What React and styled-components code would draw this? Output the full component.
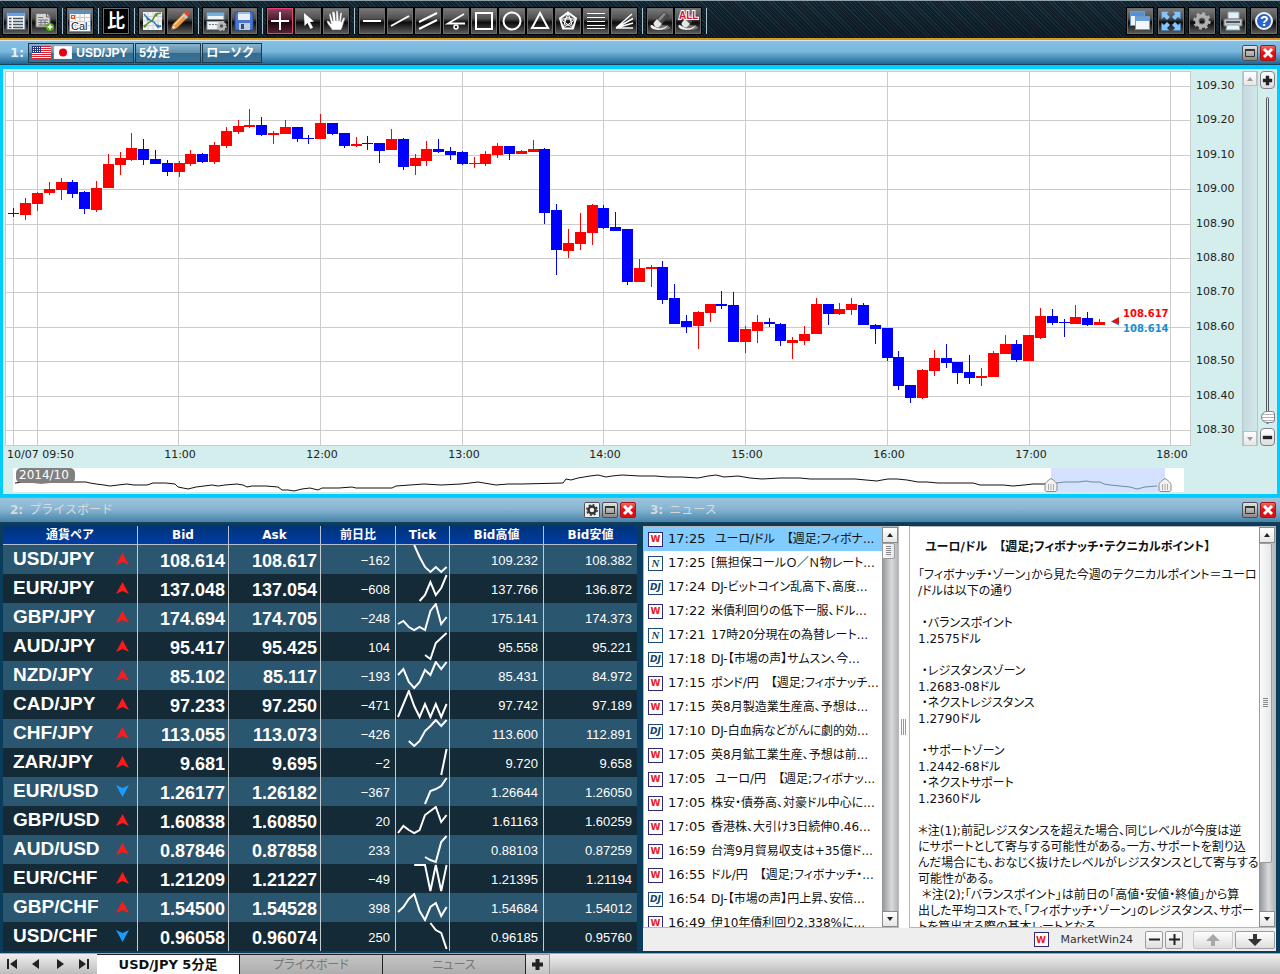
import React, { useState } from 'react';
import styled, { createGlobalStyle, css } from 'styled-components';

const verdana = '"DejaVu Sans", "Noto Sans CJK JP", sans-serif';
const arial = '"Liberation Sans", "Noto Sans CJK JP", sans-serif';

const GlobalStyle = createGlobalStyle`
  * {
    box-sizing: border-box;
  }

  body {
    margin: 0;
    background: #0a3d5c;
    font-family: ${verdana};
    font-size: 12px;
  }

  button {
    margin: 0;
    padding: 0;
    font: inherit;
    cursor: pointer;
  }
`;

const Page = styled.div`
  display: flex;
  flex-direction: column;
  min-height: 100vh;
`;

const Toolbar = styled.header`
  display: flex;
  align-items: center;
  justify-content: space-between;
  height: 40px;
  padding: 2px 2px 0;
  border-top: 1px solid #8fa0a8;
  border-bottom: 2px solid #dc961c;
  background: linear-gradient(rgba(6, 14, 20, 0.1), rgba(6, 14, 20, 0.5)),
    repeating-linear-gradient(45deg, #14242f 0 2px, #213e4e 2px 3px);
`;

const ToolGroups = styled.div`
  display: flex;
`;

const ToolGroup = styled.div`
  display: flex;

  &::after {
    content: '';
    width: 1px;
    margin: 1px 3px 1px 4px;
    background: #a9c0cc;
  }
`;

const WindowTools = styled.div`
  display: flex;
  gap: 3px;
`;

const ToolButton = styled.button`
  display: flex;
  align-items: center;
  justify-content: center;
  width: 28px;
  height: 28px;
  border: 1px solid #000;
  outline: 1px solid ${props => (props.$active ? '#e8417c' : '#6d6d6d')};
  outline-offset: -2px;
  background: ${props => {
    if (props.$active) return 'linear-gradient(#8d4a60 0%, #4a1526 48%, #16040a 52%, #5e2437 100%)';
    if (props.$dark) return '#000';
    return 'linear-gradient(#7c7c7c 0%, #505050 40%, #0c0c0c 56%, #606060 100%)';
  }};
`;

const Pane = styled.section`
  display: flex;
  flex-direction: column;
  min-width: 0;
`;

const TitleBar = styled.div`
  display: flex;
  align-items: center;
  height: ${props => (props.$focused ? '25px' : '26px')};
  padding: 0 4px 0 10px;
  border-top: 1px solid ${props => (props.$focused ? '#d4e8f4' : '#8e9aa4')};
  border-bottom: 1px solid #16425e;
  color: ${props => (props.$focused ? '#e4f0f8' : '#d4dade')};
  background: ${props => (props.$focused
    ? 'linear-gradient(#86c0e4 0%, #7ab8de 45%, #1d6795 100%)'
    : 'linear-gradient(#9cc3dc 0%, #88b6d2 45%, #4683a8 100%)')};
`;

const Title = styled.h2`
  flex: 1;
  margin: 0;
  font-size: 12px;
  font-weight: bold;
  line-height: 16px;
  white-space: pre;

  span {
    margin-left: 2px;
    font-weight: normal;
  }
`;

const TitleNumber = styled.h2`
  margin: 0 4px 0 0;
  font-size: 13px;
  line-height: 16px;
`;

const ChartOptions = styled.div`
  display: flex;
  flex: 1;
  gap: 1px;
`;

const ChartOption = styled.button`
  display: flex;
  align-items: center;
  gap: 4px;
  width: ${props => props.$width}px;
  height: 20px;
  padding: 0 3px;
  border: 1px solid #1b3b50;
  color: #fff;
  font-family: ${arial};
  font-size: 12px;
  font-weight: bold;
  line-height: 18px;
  white-space: nowrap;
  background: linear-gradient(#8ab4cc 0%, #5e8fac 48%, #346b8e 52%, #3b7396 100%);
`;

const WindowButtons = styled.div`
  display: flex;
  gap: 2px;
`;

const WindowButton = styled.button`
  display: flex;
  align-items: center;
  justify-content: center;
  width: 16px;
  height: 16px;
  border: 1px solid ${props => (props.$close ? '#a51414' : '#4c5054')};
  border-radius: 2px;
  background: ${props => (props.$close
    ? 'linear-gradient(#f06a60, #e01010 50%)'
    : 'linear-gradient(#e4e4e4, #888)')};
`;

const ChartBody = styled.div`
  padding-bottom: 2px;
  border: 3px solid #00ccff;
  border-top-width: 4px;
  background: #d4eded;
`;

const ChartRow = styled.div`
  display: flex;
  height: 399px;
`;

const PlotSvg = styled.svg`
  flex: 1;
  min-width: 0;
  height: 397px;
`;

const AxisSvg = styled.svg`
  width: 50px;
  height: 397px;
`;

const ChartScroll = styled.div`
  display: flex;
  flex-direction: column;
  justify-content: space-between;
  width: 16px;
  height: 375px;
  margin-top: 2px;
  border-left: 1px solid #b4cad0;
  border-right: 1px solid #b4cad0;
  background: linear-gradient(90deg, #c4dadf, #d2e7ea);
`;

const ScrollButton = styled.button`
  display: flex;
  align-items: center;
  justify-content: center;
  flex: none;
  width: 100%;
  height: ${props => (props.$faded ? '15px' : '16px')};
  border: 1px solid ${props => (props.$faded ? '#b8c0c4' : '#8c8c8c')};
  background: linear-gradient(#fff, #e6e6e6);
`;

const ZoomColumn = styled.div`
  display: flex;
  flex-direction: column;
  align-items: center;
  width: 19px;
  height: 375px;
  margin-top: 2px;
`;

const ZoomButton = styled.button`
  display: flex;
  align-items: center;
  justify-content: center;
  flex: none;
  width: 15px;
  height: 18px;
  border: 1px solid #808488;
  border-radius: 4px;
  background: linear-gradient(#fff, #dcdcdc);
`;

const ZoomSlider = styled.input`
  appearance: none;
  flex: 1;
  width: 16px;
  min-height: 0;
  margin: 8px 0 4px;
  writing-mode: vertical-lr;
  direction: rtl;
  background: transparent;

  &::-webkit-slider-runnable-track {
    width: 3px;
    border: 1px solid #50585c;
    border-radius: 2px;
    background: #dbe6e8;
  }

  &::-webkit-slider-thumb {
    appearance: none;
    width: 14px;
    height: 12px;
    margin-left: -6px;
    border: 1px solid #808488;
    border-radius: 8px 4px 4px 8px;
    background: repeating-linear-gradient(#fff 0 2px, #b4b4b4 2px 3px);
  }
`;

const NavigatorSvg = styled.svg`
  display: block;
  width: 100%;
  height: 24px;
`;

const Workspace = styled.main`
  display: grid;
  grid-template-columns: 1fr 1fr;
  flex: 1;
`;

const PaneBody = styled.div`
  display: flex;
  flex-direction: column;
  flex: 1;
  padding: 3px ${props => props.$right || '3px'} 2px 3px;
  background: #0a3d5c;
`;

const PriceTable = styled.table`
  width: 100%;
  table-layout: fixed;
  border-collapse: separate;
  border-spacing: 0;
  color: #fff;
`;

const HeadCell = styled.th`
  height: 19px;
  padding: 0;
  border-right: 1px solid #b9c3d6;
  border-bottom: 1px solid #b4bfcc;
  font-size: 12px;
  line-height: 16px;
  background: linear-gradient(#003478, #003ca4);

  &:last-child {
    border-right: 0;
  }
`;

const PriceRow = styled.tr`
  background: #142a36;

  &:nth-child(odd) {
    background: #2b566f;
  }
`;

const cell = css`
  height: 29px;
  border-right: 1px solid #c4ccd2;
  font-family: ${arial};

  &:last-child {
    border-right: 0;
  }
`;

const PairCell = styled.th`
  ${cell}
  padding: 0 8px 2px 10px;
  text-align: left;
`;

const PairLabel = styled.div`
  display: flex;
  align-items: center;
  justify-content: space-between;
  font-size: 19px;
  line-height: 26px;
`;

const RateCell = styled.td`
  ${cell}
  padding: 3px 3px 0;
  font-size: 18px;
  font-weight: bold;
  line-height: 26px;
  text-align: right;
`;

const NumberCell = styled.td`
  ${cell}
  padding: 3px 5px 0;
  font-size: 13px;
  line-height: 26px;
  text-align: right;
`;

const TickCell = styled.td`
  ${cell}
  padding: 0;

  svg {
    display: block;
    margin-left: auto;
  }
`;

const NewsBody = styled.div`
  display: flex;
  flex: 1;
  background: #fff;
  font-feature-settings: "palt";
`;

const NewsListBox = styled.div`
  display: flex;
  flex: none;
  width: 256px;
  border: 1px solid #b4b8ba;
`;

const NewsList = styled.ul`
  flex: 1;
  contain: size;
  overflow: hidden;
  margin: 0;
  padding: 0;
  list-style: none;
`;

const NewsItem = styled.li`
  background: ${props => (props.$selected ? '#80ccff' : '#fff')};
`;

const NewsLink = styled.a`
  display: flex;
  align-items: center;
  height: 24px;
  padding-left: 4px;
  color: #111;
  font-size: 12px;
  line-height: 16px;
  text-decoration: none;
  white-space: pre;
`;

const NewsTime = styled.time`
  width: 43px;
  margin-left: 5px;
  font-size: 13px;
`;

const SourceBadge = styled.span`
  display: flex;
  align-items: center;
  justify-content: center;
  flex: none;
  width: 15px;
  height: 15px;
  border: 1px solid ${props => (props.$source === 'W' ? '#2e2a78' : '#1d4a7c')};
  color: ${props => (props.$source === 'W' ? '#f01818' : '#12406c')};
  background: #fff;
  font-family: ${props => (props.$source === 'N' ? '"Liberation Serif", serif' : verdana)};
  font-size: ${props => (props.$source === 'N' ? '11px' : '9px')};
  font-weight: bold;
  font-style: ${props => (props.$source === 'W' ? 'normal' : 'italic')};
  line-height: 12px;
`;

const VerticalScroll = styled.div`
  display: flex;
  flex-direction: column;
  flex: none;
  width: 16px;
  background: linear-gradient(90deg, #8f9396, #d8dadb 60%, #b2b5b8);
`;

const ScrollTrack = styled.div`
  flex: 1;
`;

const ScrollThumb = styled.div`
  display: flex;
  align-items: center;
  justify-content: center;
  width: 13px;
  height: ${props => props.$height};
  border: 1px solid #9a9ea0;
  border-radius: 0 2px 2px 0;
  background: linear-gradient(90deg, #fafafa, #e8e8e8);
`;

const Splitter = styled.div`
  display: flex;
  align-items: center;
  justify-content: center;
  flex: none;
  width: 10px;
`;

const ArticleBox = styled.div`
  display: flex;
  flex: 1;
  min-width: 0;
  border: 1px solid #b4b8ba;
`;

const Article = styled.article`
  flex: 1;
  contain: size;
  overflow: hidden;
  padding: 12px 0 0 8px;
  color: #111;
  font-size: 12px;
  line-height: 16px;
  white-space: pre;
`;

const ArticleTitle = styled.h3`
  margin: 0 0 12px;
  padding-left: 3px;
  font-size: 12px;
  line-height: 16px;
`;

const ArticleLine = styled.p`
  min-height: 16px;
  margin: 0;
`;

const NewsFooter = styled.footer`
  display: flex;
  align-items: center;
  justify-content: flex-end;
  height: 23px;
  padding: 0 1px;
  color: #333;
  font-size: 11px;
  background: #eee;
`;

const SourceName = styled.span`
  margin: 0 12px;
`;

const FooterGroup = styled.div`
  display: flex;
  gap: 2px;
  margin-left: ${props => props.$gap || '0'};
`;

const FooterButton = styled.button`
  display: flex;
  align-items: center;
  justify-content: center;
  width: ${props => (props.$wide ? '40px' : '18px')};
  height: 18px;
  border: 1px solid ${props => (props.disabled ? '#c8c8c8' : '#9c9c9c')};
  border-radius: 2px;
  background: linear-gradient(#fefefe, #dedede);
`;

const TabBar = styled.nav`
  display: flex;
  height: 21px;
  border-top: 1px solid #a8a8a8;
  background: linear-gradient(#f0f0f0, #bcbcbc);
`;

const TabArrows = styled.div`
  display: flex;
  width: 97px;
`;

const TabArrow = styled.button`
  display: flex;
  align-items: center;
  justify-content: center;
  width: 24px;
  border: 0;
  background: transparent;
`;

const Tab = styled.button`
  width: 143px;
  border: 1px solid #222;
  border-width: 1px 1px 0 0;
  color: ${props => (props.$selected ? '#111' : '#777')};
  font-size: ${props => (props.$selected ? '13px' : '12px')};
  font-weight: ${props => (props.$selected ? 'bold' : 'normal')};
  font-feature-settings: "palt";
  line-height: 18px;
  background: ${props => (props.$selected ? '#fff' : 'linear-gradient(#c4c4c4, #aeaeae)')};
`;

const AddTab = styled.button`
  display: flex;
  align-items: center;
  justify-content: center;
  width: 24px;
  border: 1px solid #999;
  border-width: 1px 1px 0 0;
  background: linear-gradient(#e4e4e4, #c4c4c4);
`;

// direction, high, body top, body bottom, low
const candles = [
  ['d', 208, 213, 214, 217], ['u', 198, 203, 215, 220], ['u', 192, 193, 204, 211], ['u', 182, 189, 193, 195],
  ['u', 178, 182, 190, 200], ['d', 180, 182, 194, 198], ['d', 191, 192, 209, 214], ['u', 181, 188, 210, 212],
  ['u', 154, 164, 188, 188], ['u', 152, 158, 165, 175], ['u', 133, 148, 160, 161], ['d', 139, 149, 160, 165],
  ['d', 150, 159, 164, 164], ['d', 160, 163, 172, 176], ['u', 161, 163, 172, 177], ['u', 150, 154, 164, 166],
  ['d', 153, 154, 162, 163], ['u', 142, 145, 162, 164], ['u', 127, 131, 146, 148], ['u', 120, 126, 132, 134],
  ['u', 109, 125, 127, 128], ['d', 117, 125, 135, 136], ['u', 131, 133, 135, 144], ['u', 120, 127, 134, 134],
  ['d', 127, 127, 139, 142], ['d', 135, 138, 139, 144], ['u', 114, 123, 139, 139], ['d', 123, 123, 134, 135],
  ['d', 133, 133, 146, 148], ['u', 137, 144, 146, 147], ['d', 136, 143, 144, 150], ['d', 143, 143, 151, 163],
  ['u', 129, 139, 150, 150], ['d', 138, 139, 167, 170], ['u', 154, 158, 166, 175], ['u', 141, 149, 161, 166],
  ['d', 139, 149, 152, 153], ['d', 147, 151, 155, 160], ['d', 151, 152, 164, 165], ['u', 157, 163, 164, 168],
  ['u', 151, 154, 164, 166], ['u', 143, 146, 155, 158], ['d', 146, 146, 154, 160], ['u', 150, 151, 154, 154],
  ['u', 140, 149, 152, 152], ['d', 148, 149, 213, 224], ['d', 204, 210, 250, 275], ['u', 229, 243, 251, 258],
  ['u', 213, 232, 244, 250], ['u', 204, 205, 233, 245], ['d', 205, 208, 228, 229], ['d', 212, 227, 231, 231],
  ['d', 229, 229, 282, 285], ['u', 259, 268, 282, 282], ['u', 265, 267, 269, 287], ['d', 261, 267, 300, 304],
  ['d', 284, 298, 324, 324], ['d', 315, 321, 327, 333], ['u', 311, 312, 326, 349], ['u', 304, 304, 313, 322],
  ['d', 291, 304, 306, 309], ['d', 292, 305, 342, 342], ['u', 326, 329, 342, 353], ['u', 315, 322, 331, 343],
  ['d', 318, 322, 324, 327], ['d', 323, 324, 341, 346], ['u', 337, 340, 343, 359], ['u', 326, 334, 341, 345],
  ['u', 298, 304, 334, 334], ['d', 304, 304, 314, 325], ['u', 303, 309, 314, 315], ['u', 298, 304, 310, 315],
  ['d', 303, 305, 325, 325], ['d', 324, 325, 329, 344], ['d', 328, 328, 358, 361], ['d', 351, 357, 386, 390],
  ['d', 385, 385, 398, 403], ['u', 369, 370, 398, 399], ['u', 350, 358, 371, 376], ['d', 344, 358, 363, 368],
  ['d', 362, 362, 373, 384], ['d', 355, 372, 378, 384], ['u', 368, 376, 378, 386], ['u', 351, 353, 377, 377],
  ['u', 335, 344, 354, 354], ['d', 340, 344, 360, 362], ['u', 335, 335, 361, 361], ['u', 308, 316, 338, 339],
  ['d', 309, 316, 323, 325], ['d', 319, 322, 323, 337], ['u', 305, 317, 324, 324], ['d', 312, 318, 325, 326],
  ['u', 319, 322, 325, 325],
];

const priceLines = [
  [86, '109.30'], [120, '109.20'], [155, '109.10'], [189, '109.00'], [224, '108.90'], [258, '108.80'],
  [292, '108.70'], [327, '108.60'], [361, '108.50'], [396, '108.40'], [430, '108.30'],
];

const timeLines = [
  [178, '11:00'], [320, '12:00'], [462, '13:00'], [603, '14:00'], [745, '15:00'], [887, '16:00'],
  [1029, '17:00'], [1170, '18:00'],
];

const history = '15,15 24,14 41,15 60,14 86,14 90,15 96,16 104,17 110,18 118,17 127,16 134,17 147,17 153,15 159,15 166,15 175,16 178,19 188,21 196,19 204,18 212,17 218,18 225,17 237,16 243,17 247,19 252,18 257,18 266,18 278,19 282,22 288,22 294,23 302,21 310,20 318,22 322,20 339,20 352,19 356,20 392,20 396,18 410,17 424,16 441,17 461,16 470,15 478,14 484,15 496,17 508,16 522,16 563,15 566,11 571,12 578,10 584,9 590,8 598,7 606,9 612,8 622,7 640,8 655,8 668,9 682,9 698,10 708,8 716,7 724,9 738,8 750,10 762,11 780,10 800,10 810,11 833,11 855,11 866,12 877,13 882,12 888,11 897,11 907,12 918,14 927,14 938,15 947,15 960,15 973,15 980,17 993,17 1003,17 1013,18 1024,17 1033,16 1047,16';
const recent = '1047,16 1057,15 1064,14 1078,14 1086,13 1092,14 1100,14 1104,16 1110,17 1120,18 1130,19 1137,21 1145,19 1157,18';

const prices = [
  ['USD/JPY', 'up', '108.614', '108.617', '−162', [0, 12, 22, 27, 22, 27, 22], '109.232', '108.382'],
  ['EUR/JPY', 'up', '137.048', '137.054', '−608', [27, 21, 8, 21, 14, 1], '137.766', '136.872'],
  ['GBP/JPY', 'up', '174.694', '174.705', '−248', [21, 18, 24, 27, 24, 27, 8, 1, 21, 14], '175.141', '174.373'],
  ['AUD/JPY', 'up', '95.417', '95.425', '104', [23, 27, 11, 6, 1], '95.558', '95.221'],
  ['NZD/JPY', 'up', '85.102', '85.117', '−193', [14, 8, 21, 27, 21, 9, 14, 1, 8, 1], '85.431', '84.972'],
  ['CAD/JPY', 'up', '97.233', '97.250', '−471', [27, 14, 1, 16, 27, 14, 27, 14, 27, 14], '97.742', '97.189'],
  ['CHF/JPY', 'up', '113.055', '113.073', '−426', [22, 27, 22, 12, 7, 1, 7, 1], '113.600', '112.891'],
  ['ZAR/JPY', 'up', '9.681', '9.695', '−2', [27, 1], '9.720', '9.658'],
  ['EUR/USD', 'down', '1.26177', '1.26182', '−367', [27, 14, 12, 9, 1], '1.26644', '1.26050'],
  ['GBP/USD', 'up', '1.60838', '1.60850', '20', [27, 20, 24, 27, 24, 9, 5, 1, 16, 9], '1.61163', '1.60259'],
  ['AUD/USD', 'up', '0.87846', '0.87858', '233', [22, 25, 27, 7, 1], '0.88103', '0.87259'],
  ['EUR/CHF', 'up', '1.21209', '1.21227', '−49', [1, 1, 1, 27, 1, 27, 1], '1.21395', '1.21194'],
  ['GBP/CHF', 'up', '1.54500', '1.54528', '398', [19, 14, 6, 1, 18, 27, 14, 10, 23, 14], '1.54684', '1.54012'],
  ['USD/CHF', 'down', '0.96058', '0.96074', '250', [1, 8, 11, 27], '0.96185', '0.95760'],
];

const columns = [
  ['通貨ペア', 135], ['Bid', 91], ['Ask', 92], ['前日比', 75], ['Tick', 54], ['Bid高値', 94], ['Bid安値', 93],
];

const news = [
  ['W', '17:25', ' ユーロ/ドル　【週足;フィボナ...'],
  ['N', '17:25', '[無担保コールＯ／Ｎ物レート...'],
  ['DJ', '17:24', 'DJ-ビットコイン乱高下、高度...'],
  ['W', '17:22', '米債利回りの低下一服、ドル...'],
  ['N', '17:21', '17時20分現在の為替レート...'],
  ['DJ', '17:18', 'DJ-【市場の声】サムスン、今...'],
  ['W', '17:15', 'ポンド/円　【週足;フィボナッチ...'],
  ['W', '17:15', '英8月製造業生産高、予想は...'],
  ['DJ', '17:10', 'DJ-白血病などがんに劇的効...'],
  ['W', '17:05', '英8月鉱工業生産、予想は前...'],
  ['W', '17:05', ' ユーロ/円　【週足;フィボナッ...'],
  ['W', '17:05', '株安・債券高、対豪ドル中心に...'],
  ['W', '17:05', '香港株、大引け3日続伸0.46...'],
  ['W', '16:59', '台湾9月貿易収支は+35億ド...'],
  ['W', '16:55', 'ドル/円　【週足;フィボナッチ・...'],
  ['DJ', '16:54', 'DJ-【市場の声】円上昇、安倍...'],
  ['W', '16:49', '伊10年債利回り2.338%に...'],
];

const articleLines = [
  '「フィボナッチ・ゾーン」から見た今週のテクニカルポイント＝ユーロ',
  '/ドルは以下の通り',
  '',
  ' ・バランスポイント',
  '1.2575ドル',
  '',
  ' ・レジスタンスゾーン',
  '1.2683-08ドル',
  ' ・ネクストレジスタンス',
  '1.2790ドル',
  '',
  ' ・サポートゾーン',
  '1.2442-68ドル',
  ' ・ネクストサポート',
  '1.2360ドル',
  '',
  '＊注(1);前記レジスタンスを超えた場合、同じレベルが今度は逆',
  'にサポートとして寄与する可能性がある。一方、サポートを割り込',
  'んだ場合にも、おなじく抜けたレベルがレジスタンスとして寄与する',
  '可能性がある。',
  ' ＊注(2);「バランスポイント」は前日の「高値・安値・終値」から算',
  '出した平均コストで、「フィボナッチ・ゾーン」のレジスタンス、サポー',
  'トを算出する際の基本レートとなる。',
];

const Glyph = ({ size = 22, children }) => (
  <svg width={size} height={size} viewBox="0 0 22 22" fill="none" aria-hidden="true">{children}</svg>
);

const Eraser = () => (
  <>
    <ellipse cx="13" cy="17.500" rx="8" ry="2.500" fill="#bbb" opacity="0.5" />
    <path d="M1.500 15.500C3 14 5 17 8 18s8 0 11-3c-2 5-9 5.500-13 4.500-3-.5-5-2-4.500-4z" fill="#f2f2f2" />
    <path d="M8 9 15 2l5 4-7 8z" fill="#4c4c4c" stroke="#2a2a2a" strokeWidth="0.500" />
    <path d="m9 9 6-6.500 2 1.500-6 7z" fill="#8a8a8a" />
    <path d="m4.500 13 3.500-4 5 5-3.500 3.500c-3 0-5-2-5-4.500z" fill="#e6e6e6" />
  </>
);

const icons = {
  list: (
    <>
      <rect x="2" y="2.500" width="18" height="17" fill="#f4f6f8" stroke="#4d7db0" />
      <path d="M2.500 3h17v3h-17z" fill="#6e9fd8" />
      <path d="M4 8.500h2.500M4 11.500h2.500M4 14.500h2.500M4 17.500h2.500M8 8.500h10M8 11.500h10M8 14.500h10M8 17.500h10" stroke="#4c5660" strokeWidth="1.500" />
    </>
  ),
  addSheet: (
    <>
      <path d="M3 3.500h11l3 3V17H3z" fill="#d4d4d4" stroke="#777" />
      <path d="M5 7.500h5M5 10h10M5 12.500h10M5 15h10M8 10v6M12 10v6" stroke="#777" />
      <path d="M13.500 3v4h4" stroke="#666" />
      <circle cx="17" cy="17" r="4" fill="#59a818" />
      <path d="M17 14.500v5M14.500 17h5" stroke="#fff" strokeWidth="1.500" />
    </>
  ),
  calendar: (
    <>
      <rect x="0.500" y="0.500" width="21" height="21" fill="#fafafa" stroke="#789" />
      <path d="M1 1h20v3H1z" fill="#5590cc" />
      <path d="M1 7.500h20M1 11.500h20M1 15.500h20M6.500 4v17M11 4v17M15.500 4v17" stroke="#c8c8c8" />
      <rect x="2.500" y="5.500" width="3" height="3" stroke="#e05020" />
      <text x="2" y="20" fontSize="11" fontFamily="Liberation Sans" fill="#222" stroke="#fff" strokeWidth="2" paintOrder="stroke">Cal</text>
    </>
  ),
  compare: <text x="2" y="17" fontSize="18" fontWeight="bold" fontFamily="Noto Sans CJK JP" fill="#fff">比</text>,
  indicator: (
    <>
      <rect x="2" y="2" width="19" height="18" fill="#f0f3f5" />
      <path d="M2 6.500h19M2 11h19M2 15.500h19M7 2v18M12 2v18M17 2v18" stroke="#ccd4d8" />
      <path d="m3 17 4-4 4-2 4-7 5-1" stroke="#688c25" strokeWidth="1.500" />
      <path d="m3 4 4 5 6 3 4 5 3-1" stroke="#3777aa" strokeWidth="1.500" />
      <circle cx="7" cy="9" r="1.500" fill="#3777aa" />
      <circle cx="15" cy="5" r="1.500" fill="#688c25" />
      <circle cx="17" cy="16" r="1.500" fill="#3777aa" />
      <circle cx="4" cy="16" r="1.500" fill="#688c25" />
    </>
  ),
  pencil: (
    <>
      <path d="m2 20 2-6L15 3l4 4L8 18z" fill="#e89a48" stroke="#9c5720" strokeWidth="0.500" />
      <path d="m5 15 11-11" stroke="#ffd090" strokeWidth="1.500" />
      <path d="m14 4 2-3c2-1 5 1 4 4l-3 2z" fill="#d84a35" />
      <path d="m13 5 2-2 4 4-2 2z" fill="#c4c8ca" />
      <path d="m2 20 2-5 3 3z" fill="#ead3b0" />
      <path d="m2 20 1-2 1 1z" fill="#111" />
    </>
  ),
  panelGear: (
    <>
      <rect x="2" y="2.500" width="17" height="7" fill="#eef4f8" stroke="#5f90ba" />
      <path d="M2 3h17v3H2z" fill="#78afd9" />
      <rect x="2" y="11.500" width="17" height="8" fill="#eef4f8" stroke="#8aa" />
      <path d="M4 14.500h9" stroke="#678" strokeDasharray="2 1" />
      <circle cx="16.500" cy="16" r="3" stroke="#b8b8b8" strokeWidth="2.500" fill="#555" />
      <circle cx="16.500" cy="16" r="4.500" stroke="#b8b8b8" strokeWidth="1.500" strokeDasharray="1.770 1.770" />
    </>
  ),
  save: (
    <>
      <path d="M3 2h16l1 1v17H2V3z" fill="#4a78d0" stroke="#274b91" />
      <path d="M5 2h12v8H5z" fill="#ecf0f5" />
      <path d="M5 2h12v2H5z" fill="#9bbbe4" />
      <path d="M6 13h11v7H6z" fill="#c4ccd6" />
      <path d="M8 14h3v5H8z" fill="#2e4c83" />
    </>
  ),
  cross: <path d="M11 2v18M2 11h18" stroke="#fff" strokeWidth="2" />,
  cursor: <path d="m7 3 .5 13 3-3 3 6 2.500-1.500L13 12l4-.5z" fill="#fff" />,
  hand: (
    <path
      d="M7 20c-1-3-6-7-5-9 1-1 3 1 4 3L4 5c0-2 2-2 2 0l2 6-1-8c0-2 2-2 3 0l1 8V2c0-2 2-2 2 0l1 9 1-7c0-2 3-2 2 0l-1 8 2-4c1-1 2 0 2 1-2 4-2 8-4 11z"
      fill="#fff"
      stroke="#555"
      strokeWidth="0.500"
    />
  ),
  horizontal: <path d="M2 11h18" stroke="#fff" strokeWidth="2" />,
  trend: <path d="M2 16 20 6" stroke="#fff" strokeWidth="2" />,
  parallel: <path d="m2 12 18-9M2 19 20 10" stroke="#fff" strokeWidth="2" />,
  angle: (
    <>
      <path d="M19 4 3 13.500h17" stroke="#fff" strokeWidth="1.800" />
      <circle cx="11" cy="17" r="2" stroke="#fff" strokeWidth="1.500" />
    </>
  ),
  square: <rect x="3" y="3" width="16" height="16" stroke="#fff" strokeWidth="2" />,
  circle: <circle cx="11" cy="11" r="8.500" stroke="#fff" strokeWidth="2" />,
  triangle: <path d="m11 3 8 15H3z" stroke="#fff" strokeWidth="2" />,
  pentagon: (
    <>
      <path d="m11 2.500 8 6-3 10H6L3 8.500z" stroke="#fff" strokeWidth="2" />
      <path d="M11 3 6 18 19 9H3l13 9z" stroke="#fff" strokeWidth="1" />
      <circle cx="11" cy="11.500" r="4" stroke="#fff" strokeWidth="0.800" />
    </>
  ),
  levels: <path d="M2 3.500h18M2 7.500h18M2 11.500h18M2 15.500h18M2 18.500h18" stroke="#fff" strokeWidth="1" />,
  fan: <path d="M3 18 19 4M3 18 20 8.500M3 18l17-5M3 18h17" stroke="#fff" strokeWidth="1.500" />,
  eraser: <Eraser />,
  eraseAll: (
    <>
      <Eraser />
      <text x="2" y="9" fontSize="10" fontWeight="bold" fontFamily="Liberation Sans Narrow, Liberation Sans" fill="#d4143c" stroke="#fff" strokeWidth="2" paintOrder="stroke">ALL</text>
    </>
  ),
  windows: (
    <>
      <rect x="1.500" y="1.500" width="14" height="14" fill="#eef3f8" stroke="#6c9bc8" />
      <path d="M2 2h13v4H2z" fill="#5790d0" />
      <rect x="6.500" y="6.500" width="14" height="13" fill="#f4f7fa" stroke="#6c9bc8" />
      <path d="M7 7h13v4H7z" fill="#6aa0da" />
    </>
  ),
  expand: (
    <g fill="#8ac4f6" stroke="#3b7fc4" strokeWidth="0.600">
      <path d="M1.500 2c0-.5.500-.5.500-.5h7L7 4l3 3-3 3-3-3-2.500 2z" />
      <path d="M20.500 2c0-.5-.5-.5-.5-.5h-7L15 4l-3 3 3 3 3-3 2.500 2z" />
      <path d="M1.500 20c0 .5.500.5.500.5h7L7 18l3-3-3-3-3 3-2.500-2z" />
      <path d="M20.500 20c0 .5-.5.5-.5.5h-7l2-2.500-3-3 3-3 3 3 2.500-2z" />
    </g>
  ),
  gear: (
    <>
      <circle cx="11" cy="11" r="5" stroke="#b0b0b0" strokeWidth="4" />
      <circle cx="11" cy="11" r="7.500" stroke="#b0b0b0" strokeWidth="2.500" strokeDasharray="2.950 2.940" />
      <circle cx="11" cy="11" r="3" stroke="#666" />
    </>
  ),
  print: (
    <>
      <path d="M6 2h11v7H6z" fill="#e4eef8" stroke="#8aa" />
      <path d="M2 9h18v7H2z" fill="#c2c6c8" stroke="#777" />
      <path d="M4 11h14v2H4z" fill="#555" />
      <path d="M5 15h12l1 5H4z" fill="#e8f2fb" stroke="#8aa" />
    </>
  ),
  help: (
    <>
      <circle cx="11" cy="11" r="8" fill="#2d62c8" stroke="#f0f4fa" strokeWidth="2" />
      <text x="7" y="16" fontSize="14" fontWeight="bold" fontFamily="Liberation Sans" fill="#fff">?</text>
    </>
  ),
};

const toolGroups = [
  ['list', 'addSheet'],
  ['calendar'],
  ['compare'],
  ['indicator', 'pencil'],
  ['panelGear', 'save'],
  ['cross', 'cursor', 'hand'],
  ['horizontal', 'trend', 'parallel', 'angle', 'square', 'circle', 'triangle', 'pentagon', 'levels', 'fan'],
  ['eraser', 'eraseAll'],
];

const windowTools = ['windows', 'expand', 'gear', 'print', 'help'];

const Triangle = ({ down, color = '#222' }) => (
  <svg width="8" height="6" viewBox="0 0 8 6" aria-hidden="true">
    <path d={down ? 'M1 1h6L4 5z' : 'M1 5h6L4 1z'} fill={color} />
  </svg>
);

const PlusMinus = ({ plus, bold, size = 13 }) => (
  <svg width={size} height={size} viewBox="0 0 13 13" aria-hidden="true">
    <path d={plus ? 'M6.500 1v11M1 6.500h11' : 'M1 6.500h11'} stroke="#222" strokeWidth={bold ? 4 : 2} />
  </svg>
);

const PaneButtons = ({ gear }) => (
  <WindowButtons>
    {gear && (
      <WindowButton aria-label="設定">
        <svg width="14" height="14" viewBox="0 0 14 14" fill="none">
          <rect width="14" height="14" fill="#eee" />
          <circle cx="7" cy="7" r="3.500" stroke="#333" strokeWidth="2.500" />
          <circle cx="7" cy="7" r="5.200" stroke="#333" strokeWidth="1.500" strokeDasharray="2 2.080" />
        </svg>
      </WindowButton>
    )}
    <WindowButton aria-label="最大化">
      <svg width="12" height="10" viewBox="0 0 12 10" fill="none">
        <path d="M1.500 1.500h9v7h-9z" stroke="#333" />
        <path d="M1.500 2h9" stroke="#333" strokeWidth="2" />
      </svg>
    </WindowButton>
    <WindowButton $close aria-label="閉じる">
      <svg width="12" height="12" viewBox="0 0 12 12">
        <path d="m2 2 8 8M10 2l-8 8" stroke="#fff" strokeWidth="3" />
      </svg>
    </WindowButton>
  </WindowButtons>
);

const Flags = () => (
  <svg width="40" height="13" viewBox="0 0 40 13" aria-hidden="true">
    <rect width="19" height="13" fill="#fff" />
    <path d="M0 .5h19M0 2.500h19M0 4.500h19M0 6.500h19M0 8.500h19M0 10.500h19M0 12.500h19" stroke="#d8232e" />
    <rect width="9" height="7" fill="#26357e" />
    <path d="M1 1.500h8M1 3.500h8M1 5.500h8" stroke="#fff" strokeDasharray="1 1" />
    <rect x="22" width="18" height="13" fill="#fff" stroke="#ccc" strokeWidth="0.500" />
    <circle cx="31" cy="6.500" r="4" fill="#e60012" />
  </svg>
);

const CandleChart = () => (
  <PlotSvg role="img" aria-label="USD/JPY 5分足">
    <g transform="translate(-3 -69)" shapeRendering="crispEdges">
      <rect x="5" y="71" width="1186" height="375" fill="#ccc" />
      <rect x="6" y="72" width="1184" height="373" fill="#fff" />
      {priceLines.map(([y]) => <rect key={y} x="6" y={y} width="1184" height="1" fill="#ccc" />)}
      {[13, 37, ...timeLines.map(([x]) => x)].map(x => (
        <rect key={x} x={x} y="72" width="1" height="373" fill="#ccc" />
      ))}
      {candles.map(([dir, high, top, bottom, low], i) => {
        const x = Math.round(13.4 + i * 11.8);
        const color = dir === 'u' ? '#f00' : '#00f';
        return (
          <g key={x} fill={color}>
            <rect x={x} y={high} width="1" height={low - high} />
            <rect x={x - 5} y={top} width="11" height={bottom - top} />
          </g>
        );
      })}
    </g>
    <g transform="translate(-3 -69)" fontFamily="DejaVu Sans" fontSize="11">
      <path d="m1111 321.500 8 4v-4z" fill="#1a95d8" />
      <path d="m1111 321.500 8-4.500v7z" fill="#e01010" />
      <text x="1123" y="317" fontSize="10" fontWeight="bold" fill="#f00">108.617</text>
      <text x="1123" y="332" fontSize="10" fontWeight="bold" fill="#1a8fd0">108.614</text>
      <text x="7" y="458" fill="#222">10/07 09:50</text>
      {timeLines.map(([x, label]) => (
        <text key={label} x={x + 2} y="458" textAnchor="middle" fill="#222">{label}</text>
      ))}
    </g>
  </PlotSvg>
);

const Handle = ({ x }) => (
  <g transform={`translate(${x} 0)`}>
    <path d="M0 10.500c3 2 6 4 6 7V22c0 1-1 1.500-2 1.500h-8c-1 0-2-.5-2-1.500v-4.500c0-3 3-5 6-7z" fill="#f2f2f2" stroke="#888" />
    <path d="M-2.500 16v6M0 16v6M2.500 16v6" stroke="#aaa" />
  </g>
);

const Navigator = () => (
  <NavigatorSvg aria-hidden="true">
    <g transform="translate(-3 0)">
      <rect x="13" width="1171" height="24" fill="#fff" />
      <rect x="1051" width="114" height="24" fill="#d5e2ff" />
      <polyline points={history} fill="none" stroke="#111" />
      <polyline points={recent} fill="none" stroke="#6d8aa0" />
      <rect x="16" width="59" height="15" rx="5" fill="#808080" />
      <text x="19" y="11" fontFamily="DejaVu Sans" fontSize="12" fill="#fff">2014/10</text>
      <Handle x={1051} />
      <Handle x={1165} />
    </g>
  </NavigatorSvg>
);

const Tick = ({ values }) => {
  const start = 10 - values.length;
  const points = values.map((y, i) => `${2 + (start + i) * 5.4},${y}`).join(' ');
  return (
    <svg width="53" height="29" aria-hidden="true">
      <polyline points={points} fill="none" stroke="#fff" strokeWidth="2" />
    </svg>
  );
};

const Direction = ({ down }) => (
  <svg width="13" height="12" viewBox="0 0 13 12" aria-hidden="true">
    <path d={down ? 'M6.500 12 0 0l6.500 3L13 0z' : 'M6.500 0 13 12 6.500 9 0 12z'} fill={down ? '#1a9cff' : '#ff1a1a'} />
  </svg>
);

const Scrollbar = ({ thumb }) => (
  <VerticalScroll>
    <ScrollButton aria-label="上へ"><Triangle /></ScrollButton>
    <ScrollTrack>
      <ScrollThumb $height={thumb}>
        <svg width="5" height="10" aria-hidden="true">
          <path d="M0 .5h5M0 2.500h5M0 4.500h5M0 6.500h5M0 8.500h5" stroke="#888" />
        </svg>
      </ScrollThumb>
    </ScrollTrack>
    <ScrollButton aria-label="下へ"><Triangle down /></ScrollButton>
  </VerticalScroll>
);

const tabArrowPaths = [
  'M1 1h2v10H1zM11 1v10L4 6z',
  'M9 1v10L2 6z',
  'M3 1v10l7-5z',
  'M1 1v10l7-5zM9 1h2v10H9z',
];

const App = () => {
  const [activeTool, setActiveTool] = useState('cross');
  const [selectedNews, setSelectedNews] = useState(0);
  const [zoom, setZoom] = useState(0);

  return (
    <Page>
      <GlobalStyle />
      <Toolbar>
        <ToolGroups>
          {toolGroups.map(group => (
            <ToolGroup key={group[0]}>
              {group.map(name => (
                <ToolButton
                  key={name}
                  aria-label={name}
                  $active={name === activeTool}
                  $dark={name === 'compare'}
                  onClick={() => setActiveTool(name)}
                >
                  <Glyph>{icons[name]}</Glyph>
                </ToolButton>
              ))}
            </ToolGroup>
          ))}
        </ToolGroups>
        <WindowTools>
          {windowTools.map(name => (
            <ToolButton key={name} aria-label={name}><Glyph>{icons[name]}</Glyph></ToolButton>
          ))}
        </WindowTools>
      </Toolbar>

      <Pane>
        <TitleBar $focused>
          <TitleNumber>1:</TitleNumber>
          <ChartOptions>
            <ChartOption $width={106}><Flags />USD/JPY</ChartOption>
            <ChartOption $width={66}>5分足</ChartOption>
            <ChartOption $width={60}>ローソク</ChartOption>
          </ChartOptions>
          <PaneButtons />
        </TitleBar>
        <ChartBody>
          <ChartRow>
            <CandleChart />
            <AxisSvg aria-hidden="true">
              {priceLines.map(([y, label]) => (
                <text key={y} x="4" y={y - 66} fontFamily="DejaVu Sans" fontSize="11" fill="#222">{label}</text>
              ))}
            </AxisSvg>
            <ChartScroll>
              <ScrollButton $faded aria-label="上へ"><Triangle color="#999" /></ScrollButton>
              <ScrollButton $faded aria-label="下へ"><Triangle down color="#999" /></ScrollButton>
            </ChartScroll>
            <ZoomColumn>
              <ZoomButton aria-label="拡大"><PlusMinus plus bold size={11} /></ZoomButton>
              <ZoomSlider
                type="range"
                aria-label="ズーム"
                value={zoom}
                onChange={(e) => setZoom(Number(e.target.value))}
              />
              <ZoomButton aria-label="縮小"><PlusMinus bold size={11} /></ZoomButton>
            </ZoomColumn>
          </ChartRow>
          <Navigator />
        </ChartBody>
      </Pane>

      <Workspace>
        <Pane>
          <TitleBar>
            <Title>2: <span>プライスボード</span></Title>
            <PaneButtons gear />
          </TitleBar>
          <PaneBody>
            <PriceTable>
              <colgroup>
                {columns.map(([label, width]) => <col key={label} width={width} />)}
              </colgroup>
              <thead>
                <tr>{columns.map(([label]) => <HeadCell key={label}>{label}</HeadCell>)}</tr>
              </thead>
              <tbody>
                {prices.map(([pair, dir, bid, ask, change, ticks, high, low]) => (
                  <PriceRow key={pair}>
                    <PairCell scope="row">
                      <PairLabel>{pair}<Direction down={dir === 'down'} /></PairLabel>
                    </PairCell>
                    <RateCell>{bid}</RateCell>
                    <RateCell>{ask}</RateCell>
                    <NumberCell>{change}</NumberCell>
                    <TickCell><Tick values={ticks} /></TickCell>
                    <NumberCell>{high}</NumberCell>
                    <NumberCell>{low}</NumberCell>
                  </PriceRow>
                ))}
              </tbody>
            </PriceTable>
          </PaneBody>
        </Pane>

        <Pane>
          <TitleBar>
            <Title>3: <span>ニュース</span></Title>
            <PaneButtons />
          </TitleBar>
          <PaneBody $right="4px">
            <NewsBody>
              <NewsListBox>
                <NewsList>
                  {news.map(([source, time, title], i) => (
                    <NewsItem key={title} $selected={i === selectedNews}>
                      <NewsLink href="#news" onClick={() => setSelectedNews(i)}>
                        <SourceBadge $source={source}>{source}</SourceBadge>
                        <NewsTime>{time}</NewsTime>
                        {title}
                      </NewsLink>
                    </NewsItem>
                  ))}
                </NewsList>
                <Scrollbar thumb="16px" />
              </NewsListBox>
              <Splitter>
                <svg width="6" height="16" aria-hidden="true">
                  <path d="M.5 0v16M2.500 0v16M4.500 0v16" stroke="#999" />
                </svg>
              </Splitter>
              <ArticleBox>
                <Article>
                  <ArticleTitle> ユーロ/ドル　【週足;フィボナッチ・テクニカルポイント】</ArticleTitle>
                  {articleLines.map((line, i) => <ArticleLine key={i}>{line}</ArticleLine>)}
                </Article>
                <Scrollbar thumb="87%" />
              </ArticleBox>
            </NewsBody>
            <NewsFooter>
              <SourceBadge $source="W">W</SourceBadge>
              <SourceName>MarketWin24</SourceName>
              <FooterGroup>
                <FooterButton aria-label="文字を小さく"><PlusMinus /></FooterButton>
                <FooterButton aria-label="文字を大きく"><PlusMinus plus /></FooterButton>
              </FooterGroup>
              <FooterGroup $gap="10px">
                <FooterButton $wide disabled aria-label="前の記事">
                  <svg width="14" height="12"><path d="m7 0 7 7H9v5H5V7H0z" fill="#a8a8a8" /></svg>
                </FooterButton>
                <FooterButton $wide aria-label="次の記事">
                  <svg width="14" height="12"><path d="m7 12 7-7H9V0H5v5H0z" fill="#333" /></svg>
                </FooterButton>
              </FooterGroup>
            </NewsFooter>
          </PaneBody>
        </Pane>
      </Workspace>

      <TabBar>
        <TabArrows>
          {tabArrowPaths.map(d => (
            <TabArrow key={d} aria-label="タブ移動">
              <svg width="12" height="12" viewBox="0 0 12 12"><path d={d} fill="#222" /></svg>
            </TabArrow>
          ))}
        </TabArrows>
        <Tab $selected>USD/JPY 5分足</Tab>
        <Tab>プライスボード</Tab>
        <Tab>ニュース</Tab>
        <AddTab aria-label="タブを追加"><PlusMinus plus bold /></AddTab>
      </TabBar>
    </Page>
  );
};

export default App;
